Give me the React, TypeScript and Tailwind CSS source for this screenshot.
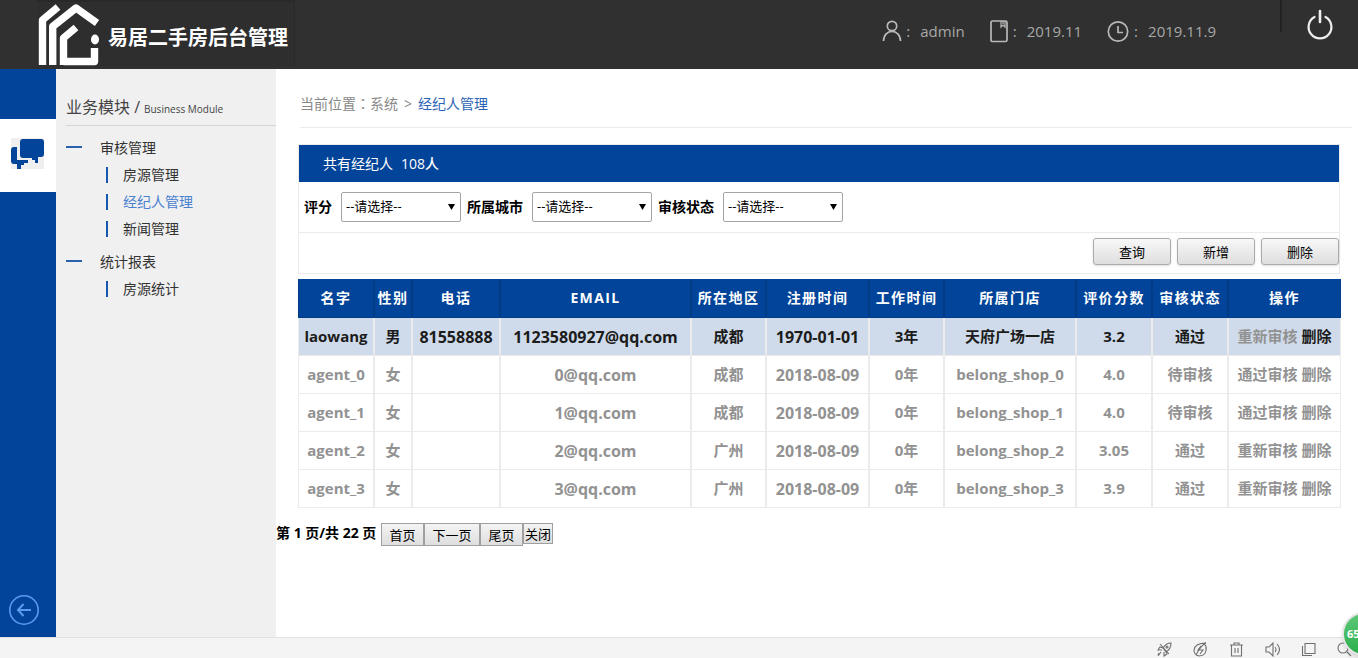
import clsx from 'clsx';
import { ButtonHTMLAttributes, ReactNode } from 'react';

type Agent = {
  name: string;
  sex: string;
  phone: string;
  email: string;
  area: string;
  date: string;
  years: string;
  shop: string;
  score: string;
  status: string;
  action: string;
};

const columns = [
  { label: '名字', width: 'w-[76px]' },
  { label: '性别', width: 'w-[38px]' },
  { label: '电话', width: 'w-[88px]' },
  { label: 'EMAIL', width: '' },
  { label: '所在地区', width: 'w-[75px]' },
  { label: '注册时间', width: 'w-[103px]' },
  { label: '工作时间', width: 'w-[75px]' },
  { label: '所属门店', width: 'w-[132px]' },
  { label: '评价分数', width: 'w-[76px]' },
  { label: '审核状态', width: 'w-[76px]' },
  { label: '操作', width: 'w-[113px]' },
];

const largeColumns = ['phone', 'email', 'date'];

const agents: Agent[] = [
  { name: 'laowang', sex: '男', phone: '81558888', email: '1123580927@qq.com', area: '成都', date: '1970-01-01', years: '3年', shop: '天府广场一店', score: '3.2', status: '通过', action: '重新审核' },
  { name: 'agent_0', sex: '女', phone: '', email: '0@qq.com', area: '成都', date: '2018-08-09', years: '0年', shop: 'belong_shop_0', score: '4.0', status: '待审核', action: '通过审核' },
  { name: 'agent_1', sex: '女', phone: '', email: '1@qq.com', area: '成都', date: '2018-08-09', years: '0年', shop: 'belong_shop_1', score: '4.0', status: '待审核', action: '通过审核' },
  { name: 'agent_2', sex: '女', phone: '', email: '2@qq.com', area: '广州', date: '2018-08-09', years: '0年', shop: 'belong_shop_2', score: '3.05', status: '通过', action: '重新审核' },
  { name: 'agent_3', sex: '女', phone: '', email: '3@qq.com', area: '广州', date: '2018-08-09', years: '0年', shop: 'belong_shop_3', score: '3.9', status: '通过', action: '重新审核' },
];

const menu = [
  { title: '审核管理', items: ['房源管理', '经纪人管理', '新闻管理'] },
  { title: '统计报表', items: ['房源统计'] },
];

const filters = [
  { id: 'score', label: '评分' },
  { id: 'city', label: '所属城市' },
  { id: 'status', label: '审核状态' },
];

const Logo = () => (
  <svg
    className="h-[63px] w-[62px]"
    viewBox="0 0 62 63"
    fill="none"
    stroke="#fff"
    strokeWidth="7.400"
    strokeLinejoin="round"
    aria-hidden="true"
  >
    <path d="M4.500 62V17L20 4" />
    <path d="M14.700 62V23.500L38 5L59 20" />
    <path d="M25.500 62V35L38 24.500M25.500 58.500H56.500V45" />
    <ellipse cx="57" cy="36.500" rx="4" ry="5" fill="#fff" stroke="none" />
  </svg>
);

const UserIcon = () => (
  <svg className="h-6 w-5" viewBox="0 0 20 24" fill="none" stroke="#b8b8b8" strokeWidth="1.7" aria-hidden="true">
    <circle cx="10" cy="7" r="4.7" />
    <path d="M1.5 22C1.7 9.200 18.300 9.200 18.500 22" />
  </svg>
);

const BookIcon = () => (
  <svg className="h-6 w-5" viewBox="0 0 20 24" fill="none" stroke="#b8b8b8" strokeWidth="1.7" aria-hidden="true">
    <rect x="2" y="2" width="16" height="20.500" rx="1.500" />
    <path d="M12 2V8L14 6L16 8V2M14 2V5" strokeWidth="1.200" />
  </svg>
);

const ClockIcon = () => (
  <svg className="h-6 w-6" viewBox="0 0 24 24" fill="none" stroke="#b8b8b8" strokeWidth="1.7" aria-hidden="true">
    <circle cx="12" cy="12.500" r="9.700" />
    <path d="M12 7V13.500H17" />
  </svg>
);

type InfoProps = { icon: ReactNode; text: string };
const Info = ({ icon, text }: InfoProps) => (
  <div className="flex items-center text-[15px] text-[#a8a8a8]">
    {icon}
    <span className="w-[18px] pl-1">:</span>
    <span>{text}</span>
  </div>
);

const Header = () => (
  <header className="flex h-[69px] items-start bg-[#303030]">
    <div className="ml-[37px] flex h-[66px] items-center gap-2 border-r border-t-2 border-[#292929] bg-[#2e2e2e] pl-px pr-1.5">
      <Logo />
      <h1 className="pt-2 text-[20px] font-bold leading-7 text-white">易居二手房后台管理</h1>
    </div>
    <div className="ml-auto flex gap-6 pt-[19px]">
      <Info icon={<UserIcon />} text="admin" />
      <Info icon={<BookIcon />} text="2019.11" />
      <Info icon={<ClockIcon />} text="2019.11.9" />
    </div>
    <div className="ml-16 h-8 w-0.5 bg-[#222]" />
    <button type="button" aria-label="退出" className="ml-6 mr-6 mt-2 h-8 w-7">
      <svg className="h-8 w-7" viewBox="0 0 28 32" fill="none" stroke="#eee" strokeWidth="2.200" strokeLinecap="round" aria-hidden="true">
        <path d="M8.500 9A11.400 11.400 0 1 0 19.500 9" />
        <path d="M14 3V14" strokeWidth="2.600" />
      </svg>
    </button>
  </header>
);

const Rail = () => (
  <div className="flex w-14 shrink-0 flex-col bg-[#014499]">
    <button type="button" aria-label="业务模块" className="mt-[50px] flex h-[73px] items-start bg-white pl-[11px] pt-[18px]">
      <svg className="h-8 w-[33px]" viewBox="0 0 33 32" aria-hidden="true">
        <rect y="1" width="33" height="31" fill="#efefef" />
        <path fill="#014499" d="M3 10H6V23H17V26H13V28H10V32H6V27H3Q0 27 0 24V13Q0 10 3 10Z" />
        <path fill="#014499" d="M12 2H30Q33 2 33 5V17Q33 20 30 20H27V26H24V23H21V21H12Q9 21 9 18V5Q9 2 12 2Z" />
      </svg>
    </button>
    <button type="button" aria-label="返回" className="mb-[11px] ml-2 mt-auto h-8 w-8">
      <svg className="h-8 w-8" viewBox="0 0 32 32" fill="none" stroke="#5a9bee" strokeWidth="1.600" aria-hidden="true">
        <circle cx="16" cy="16" r="14.200" />
        <path d="M23 16H10M15.500 10L10 16L15.500 22" strokeWidth="2" />
      </svg>
    </button>
  </div>
);

const Sidebar = () => (
  <nav className="w-[220px] shrink-0 bg-[#f0f0f0] pl-2.5 text-sm text-[#333]">
    <h2 className="mt-6 flex h-[33px] items-center gap-1 border-b border-[#d5d5d5] pb-1 text-base text-[#444]">
      业务模块 / <span className="pt-1 text-[10px]">Business Module</span>
    </h2>
    <div className="flex flex-col gap-1.5 pt-2">
      {menu.map(group => (
        <div key={group.title}>
          <div className="flex h-[27px] items-center">
            <span className="mb-0.5 mr-[18px] h-0.5 w-4 bg-[#2a62b0]" />
            {group.title}
          </div>
          {group.items.map(item => (
            <a
              key={item}
              href="#"
              className={clsx('flex h-[27px] items-center pl-10', item === '经纪人管理' && 'text-[#4a80d0]')}
            >
              <span className="mr-[15px] h-4 w-0.5 bg-[#1857b0]" />
              {item}
            </a>
          ))}
        </div>
      ))}
    </div>
  </nav>
);

const ToolButton = ({ children }: ButtonHTMLAttributes<HTMLButtonElement>) => (
  <button
    type="button"
    className="h-[27px] w-[78px] rounded-[3px] border border-[#aaa] bg-linear-to-b from-[#f8f8f8] to-[#dedede] pt-0.5 text-[13px] text-black shadow-sm"
  >
    {children}
  </button>
);

const FilterPanel = () => (
  <section className="mr-[18px] mt-4 border border-[#ebebeb]">
    <p className="flex h-[37px] items-center gap-2 bg-[#014499] pl-6 text-sm text-white">
      共有经纪人
      <span className="font-medium">108人</span>
    </p>
    <div className="flex h-[51px] items-center gap-1.5 border-b border-[#ebebeb] pl-[5px]">
      {filters.map(({ id, label }) => (
        <div key={id} className="flex items-center gap-[9px]">
          <label htmlFor={id} className="text-sm font-bold text-black">{label}</label>
          <div className="relative">
            <select id={id} className="h-[30px] w-[120px] appearance-none rounded-xs border border-[#a5a5a5] bg-white pl-1 text-[13px] text-black">
              <option>--请选择--</option>
            </select>
            <svg className="pointer-events-none absolute right-1.5 top-3 h-1.5 w-[7px]" viewBox="0 0 7 6" aria-hidden="true">
              <path d="M0 0H7L3.500 6Z" />
            </svg>
          </div>
        </div>
      ))}
    </div>
    <div className="flex h-10 justify-end gap-1.5 pt-[5px]">
      <ToolButton>查询</ToolButton>
      <ToolButton>新增</ToolButton>
      <ToolButton>删除</ToolButton>
    </div>
  </section>
);

const AgentTable = () => (
  <div className="mr-[17px] mt-[5px]">
    <table className="w-full table-fixed border-separate border-spacing-0 whitespace-nowrap text-center text-[15px] font-bold">
      <thead>
        <tr className="h-[39px] bg-[#014499] text-sm text-white">
          {columns.map(({ label, width }) => (
            <th key={label} className={clsx('border-x border-b border-[#023c86] p-0 tracking-widest', width)}>
              {label}
            </th>
          ))}
        </tr>
      </thead>
      <tbody>
        {agents.map(({ action, ...agent }, index) => (
          <tr key={agent.name} className={clsx('h-[38px]', index === 0 ? 'bg-[#cfdbea] text-[#1c1c1c]' : 'text-[#929292]')}>
            {Object.entries(agent).map(([key, value]) => (
              <td key={key} className={clsx('border-x border-b border-[#ebebeb] p-0', largeColumns.includes(key) && 'text-base')}>
                {value}
              </td>
            ))}
            <td className="border-x border-b border-[#ebebeb] p-0">
              <a href="#" className="text-[#929292]">{action}</a> <a href="#">删除</a>
            </td>
          </tr>
        ))}
      </tbody>
    </table>
  </div>
);

type PageButtonProps = { label: string; className: string };
const PageButton = ({ label, className }: PageButtonProps) => (
  <button
    type="button"
    className={clsx('border border-[#a0a0a0] bg-linear-to-b from-[#f4f4f4] to-[#dedede] text-[13px] font-normal leading-5 text-black', className)}
  >
    {label}
  </button>
);

const Pagination = () => (
  <div className="mt-[15px] flex items-start text-sm font-bold text-black">
    <span className="w-[105px] whitespace-nowrap">第 1 页/共 22 页</span>
    <PageButton label="首页" className="h-[23px] w-[43px]" />
    <PageButton label="下一页" className="h-[23px] w-14" />
    <PageButton label="尾页" className="h-[23px] w-[43px]" />
    <PageButton label="关闭" className="h-[21px] w-[30px]" />
  </div>
);

const RocketIcon = () => (
  <>
    <path d="M14 1Q9 1 6 6L9 10Q14 7 14 1ZM6 6L3 5L1 8L5 8M9 10L10 12L7 14L7 10M4 10L1 14M2 11L1 13M3 2L12 12" />
    <circle cx="10" cy="5" r="1" />
  </>
);
const BoltIcon = () => (
  <path d="M13 5Q14 14 6 14Q1 13 1 8Q2 1 13 1Q8 3 3 13M11 2Q14 4 13 8M8 4L5 8H10L7 12" />
);
const TrashIcon = () => <path d="M1 3H14M5 3V1H10V3M2.500 3V14H12.500V3M6 6V11M9 6V11" />;
const SoundIcon = () => <path d="M1 5H4L8 1V14L4 10H1ZM10 5Q12 7.500 10 10M12 2Q17 7.500 12 13" />;
const WindowIcon = () => <path d="M4 1.500H14V11.500H4ZM1.500 4V13.500H11" />;
const SearchIcon = () => (
  <>
    <circle cx="6" cy="6" r="5" />
    <path d="M10 10L14 14" />
  </>
);

const tools = [
  { label: '加速', icon: <RocketIcon /> },
  { label: '闪电', icon: <BoltIcon /> },
  { label: '清理', icon: <TrashIcon /> },
  { label: '声音', icon: <SoundIcon /> },
  { label: '窗口', icon: <WindowIcon /> },
  { label: '搜索', icon: <SearchIcon /> },
];

const StatusBar = () => (
  <footer className="flex h-[21px] items-center justify-end gap-[21px] border-t border-[#e2e2e2] bg-[#f4f4f4] pr-1.5 pt-0.5">
    {tools.map(({ label, icon }) => (
      <button key={label} type="button" aria-label={label}>
        <svg className="h-[15px] w-[15px]" viewBox="0 0 15 15" fill="none" stroke="#707070" strokeWidth="1.100" aria-hidden="true">
          {icon}
        </svg>
      </button>
    ))}
  </footer>
);

const App = () => (
  <div className="relative flex min-h-screen flex-col overflow-hidden bg-white font-['Open_Sans','Noto_Sans_CJK_SC',sans-serif]">
    <Header />
    <div className="flex flex-1">
      <Rail />
      <Sidebar />
      <main className="min-w-0 flex-1">
        <div className="pl-[22px]">
          <p className="ml-0.5 mr-1.5 mt-3 flex h-[47px] items-center gap-1.5 border-b border-[#ebebeb] text-sm text-[#888]">
            <span>
              当前位置<span className="font-['Noto_Sans_CJK_TC',sans-serif] leading-none" lang="zh-TW">：</span>系统
            </span>
            <span>&gt;</span>
            <a href="#" className="text-[#2a62b5]">经纪人管理</a>
          </p>
          <FilterPanel />
          <AgentTable />
        </div>
        <Pagination />
      </main>
    </div>
    <StatusBar />
    <div className="absolute -right-7 bottom-0.5 flex h-11 w-11 items-center rounded-full border-2 border-[#e4e4e4] bg-linear-to-b from-[#5cc878] to-[#28ad4b] pl-[3px] text-[11px] font-bold text-white shadow-md">
      65
    </div>
  </div>
);
export default App;
